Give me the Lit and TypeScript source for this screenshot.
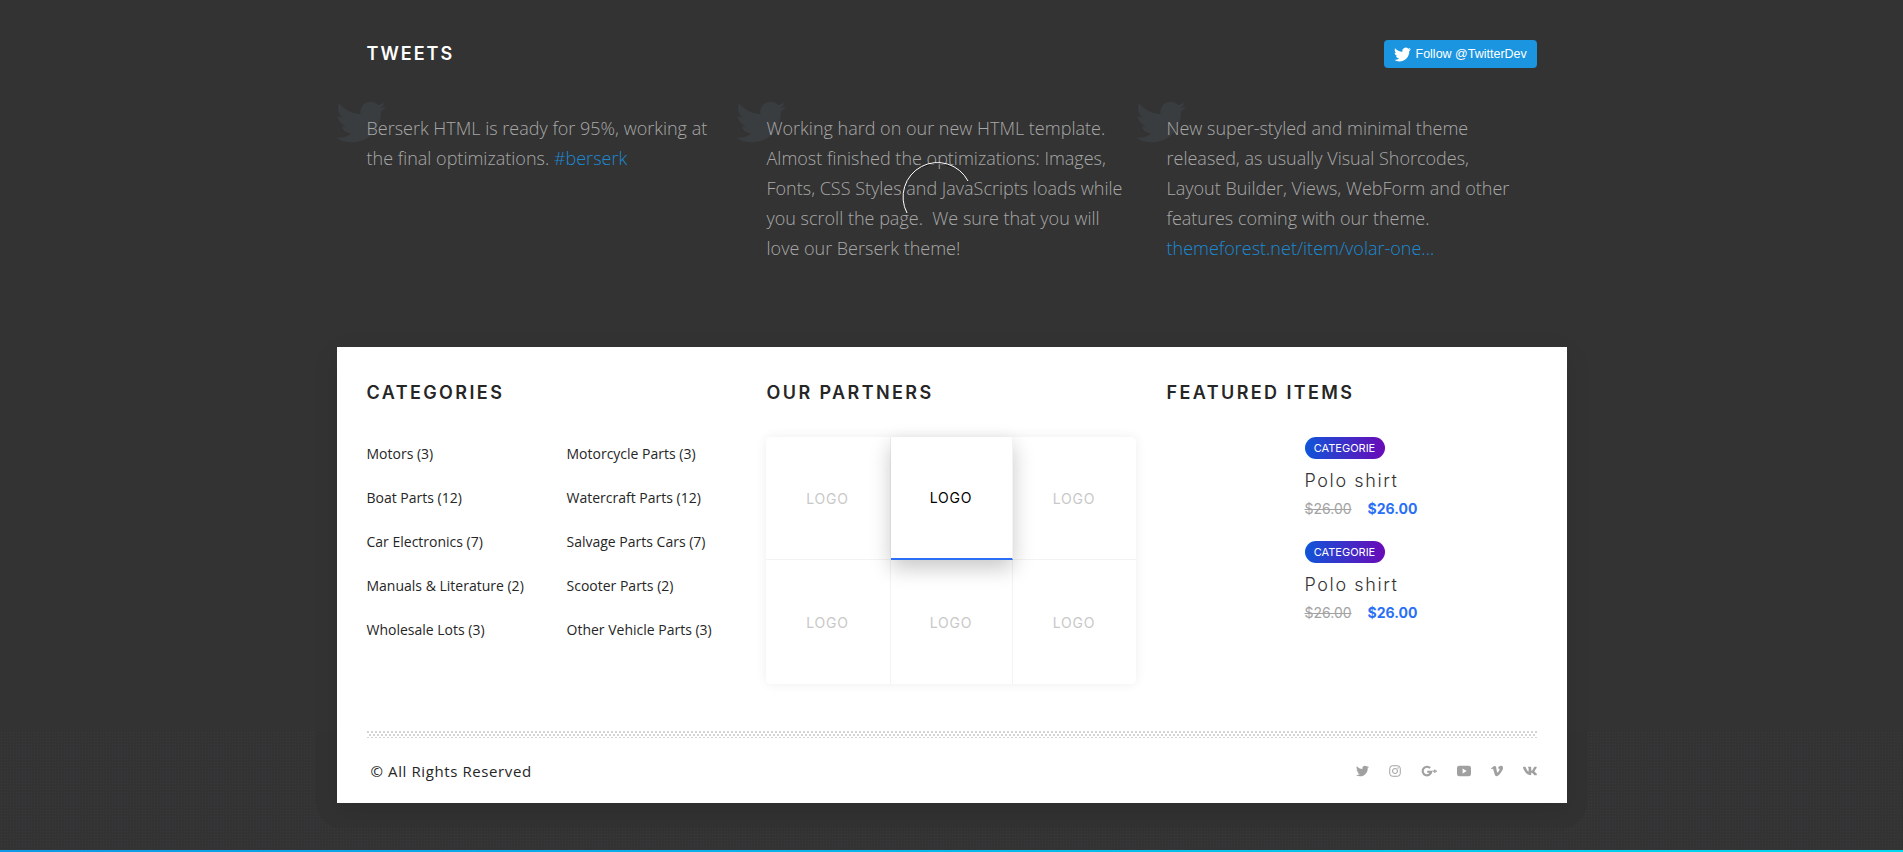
import { LitElement, html, css, svg } from "lit";
import { customElement } from "lit/decorators.js";

const BIRD =
  "M23.953 4.57a10 10 0 01-2.825.775 4.958 4.958 0 002.163-2.723c-.951.555-2.005.959-3.127 1.184a4.92 4.92 0 00-8.384 4.482C7.69 8.095 4.067 6.13 1.64 3.162a4.822 4.822 0 00-.666 2.475c0 1.71.87 3.213 2.188 4.096a4.904 4.904 0 01-2.228-.616v.06a4.923 4.923 0 003.946 4.827 4.996 4.996 0 01-2.212.085 4.936 4.936 0 004.604 3.417 9.867 9.867 0 01-6.102 2.105c-.39 0-.779-.023-1.17-.067a13.995 13.995 0 007.557 2.209c9.053 0 13.998-7.496 13.998-13.985 0-.21 0-.42-.015-.63A9.935 9.935 0 0024 4.59z";

const bird = (cls: string) =>
  html`<svg class=${cls} viewBox="0 0 24 24"><path d=${BIRD}></path></svg>`;

// width in px, viewBox, body
const SOCIAL = [
  { w: 13, box: "0 0 24 24", body: svg`<path d=${BIRD}></path>` },
  {
    w: 12,
    box: "0 0 24 24",
    body: svg`<rect x="1.5" y="1.5" width="21" height="21" rx="5.5" fill="none" stroke="currentColor" stroke-width="2"></rect><circle cx="12" cy="12" r="5" fill="none" stroke="currentColor" stroke-width="2"></circle><circle cx="18" cy="6" r="1.4"></circle>`,
  },
  {
    w: 16,
    box: "0 0 32 28",
    body: svg`<path d="M18.2 8.2a8.6 8.6 0 1 0 2.2 7.3H12.4" fill="none" stroke="currentColor" stroke-width="4.4"></path><path d="M26.4 10.8h2.4v2.4h3.2v2.4h-3.2V18h-2.4v-2.4h-3.2v-2.4h3.2z"></path>`,
  },
  {
    w: 14,
    box: "0 0 24 24",
    body: svg`<path fill-rule="evenodd" d="M4 3h16a4 4 0 0 1 4 4v10a4 4 0 0 1-4 4H4a4 4 0 0 1-4-4V7a4 4 0 0 1 4-4zm5.6 4.8v8.4l7-4.2z"></path>`,
  },
  {
    w: 12,
    box: "0 0 24 24",
    body: svg`<path d="M23.977 6.416c-.105 2.338-1.739 5.543-4.894 9.609-3.268 4.247-6.026 6.37-8.29 6.37-1.409 0-2.578-1.294-3.553-3.881L5.322 11.4C4.603 8.816 3.834 7.522 3.01 7.522c-.179 0-.806.378-1.881 1.132L0 7.197a315.065 315.065 0 003.501-3.128C5.08 2.701 6.266 1.984 7.055 1.91c1.867-.18 3.016 1.1 3.447 3.838.465 2.953.789 4.789.971 5.507.539 2.45 1.131 3.674 1.776 3.674.502 0 1.256-.796 2.265-2.385 1.004-1.589 1.54-2.797 1.612-3.628.144-1.371-.395-2.061-1.614-2.061-.574 0-1.167.121-1.777.391 1.186-3.868 3.434-5.757 6.762-5.637 2.473.06 3.628 1.664 3.493 4.797z"></path>`,
  },
  {
    w: 14,
    box: "18 56 540 400",
    body: svg`<path d="M545 117.7c3.7-12.5 0-21.7-17.8-21.7h-58.9c-15 0-21.9 7.9-25.6 16.7 0 0-29.4 72.4-71 119.3-13.4 13.4-19.5 17.7-26.8 17.7-3.7 0-9.2-4.3-9.2-16.8V117.7c0-15-4.2-21.7-16.6-21.7h-92.6c-9.4 0-15 7-15 13.5 0 14.2 21.2 17.5 23.4 57.5v86.8c0 19-3.4 22.5-10.9 22.5-20 0-68.6-73.4-97.4-157.4-5.8-16.3-11.5-22.9-26.6-22.9H38.8c-16.8 0-20.2 7.9-20.2 16.7 0 15.6 20 93.1 93.1 195.5C160.4 378.1 229 416 291.4 416c37.5 0 42.1-8.4 42.1-22.9 0-66.8-3.4-73.1 15.4-73.1 8.7 0 23.7 4.4 58.7 38.1 40 40 46.6 57.9 69 57.9h58.9c16.8 0 25.3-8.4 20.4-25-11.2-34.9-86.9-106.7-90.3-111.5-8.7-11.2-6.2-16.2 0-26.2.1-.1 72-101.3 79.4-135.6z"></path>`,
  },
];

const CATEGORIES = [
  ["Motors (3)", "Motorcycle Parts (3)"],
  ["Boat Parts (12)", "Watercraft Parts (12)"],
  ["Car Electronics (7)", "Salvage Parts Cars (7)"],
  ["Manuals & Literature (2)", "Scooter Parts (2)"],
  ["Wholesale Lots (3)", "Other Vehicle Parts (3)"],
];

@customElement("app-root")
export class AppRoot extends LitElement {
  static styles = css`
    :host {
      display: block;
      height: 852px;
      overflow: hidden;
      position: relative;
      background: #333;
      font-family: "Open Sans", sans-serif;
    }

    .band {
      position: absolute;
      left: 0;
      right: 0;
      top: 731px;
      height: 119px;
      background-color: #333;
      background-image: radial-gradient(#383b3d 0.7px, transparent 0.8px);
      background-size: 3px 3px;
    }

    .band::after {
      content: "";
      position: absolute;
      left: 316px;
      right: 316px;
      top: 0;
      height: 97px;
      border-radius: 0 0 26px 26px;
      background: #323232;
    }

    .page {
      position: relative;
      width: 1230px;
      margin: 0 auto;
    }

    .head {
      display: flex;
      justify-content: space-between;
      align-items: center;
      height: 28px;
      margin: 0 30px;
      padding-top: 40px;
    }

    h3 {
      margin: 0;
      font-family: Inter, sans-serif;
      font-size: 18px;
      font-weight: 600;
      letter-spacing: 2px;
      line-height: 28px;
      color: #fff;
      text-transform: uppercase;
    }

    .follow {
      display: flex;
      align-items: center;
      gap: 5px;
      box-sizing: border-box;
      width: 153px;
      height: 28px;
      padding-left: 10px;
      border-radius: 4px;
      background: #1b95e0;
      color: #fff;
      font-family: "Liberation Sans", sans-serif;
      font-size: 12.5px;
    }

    .follow svg {
      width: 17px;
      height: 17px;
      fill: #fff;
    }

    .tweets {
      display: grid;
      grid-template-columns: repeat(3, 400px);
      margin: 35px 0 0 30px;
      height: 179px;
    }

    .tweet {
      position: relative;
      width: 359px;
      font-size: 18px;
      font-weight: 300;
      line-height: 30px;
      color: #a8a8a8;
    }

    .tweet p {
      position: relative;
      margin: 0;
      padding-top: 10px;
    }

    .tweet a {
      color: #1b8ad3;
    }

    .tweet .bg {
      position: absolute;
      left: -31px;
      top: -6px;
      width: 50px;
      height: 50px;
      fill: #3a3d40;
    }

    .arc {
      position: absolute;
      left: 895px;
      top: 155px;
      width: 85px;
      height: 70px;
      fill: none;
    }

    .card {
      box-sizing: border-box;
      height: 456px;
      margin-top: 65px;
      padding: 0 30px;
      background: #fff;
      box-shadow: 0 8px 24px rgba(0, 0, 0, 0.1);
    }

    .cols {
      display: grid;
      grid-template-columns: repeat(3, 400px);
      height: 384px;
      padding-top: 32px;
      box-sizing: border-box;
    }

    .cols h3 {
      color: #262626;
      letter-spacing: 2.4px;
    }

    .cats {
      display: grid;
      grid-template-columns: 200px 170px;
      margin-top: 25px;
      font-size: 14px;
      line-height: 44px;
      color: #262626;
    }

    .logos {
      display: grid;
      grid-template-columns: 125px 122px 123px;
      grid-template-rows: 123px 124px;
      width: 370px;
      margin: 30px 0 0 -1px;
      border-radius: 5px;
      box-shadow: 0 0 12px rgba(0, 0, 0, 0.07);
    }

    .logo {
      display: flex;
      align-items: center;
      justify-content: center;
      box-sizing: border-box;
      border-right: 1px solid #f3f3f3;
      border-bottom: 1px solid #f3f3f3;
      font-family: Inter, sans-serif;
      font-size: 14px;
      letter-spacing: 0.8px;
      color: #c8c8c8;
    }

    .logo:nth-child(3n) {
      border-right: 0;
    }

    .logo:nth-child(n + 4) {
      border-bottom: 0;
    }

    .logo.on {
      position: relative;
      background: #fff;
      color: #000;
      border-bottom: 2px solid #2a6ff5;
      box-shadow: 0 8px 20px rgba(0, 0, 0, 0.22);
    }

    .items {
      margin: 28px 0 0 138px;
    }

    .item {
      height: 104px;
    }

    .badge {
      display: inline-block;
      width: 80px;
      height: 22px;
      border-radius: 11px;
      background: linear-gradient(90deg, #0f55d8, #6a0ab8);
      color: #fff;
      font-family: Inter, sans-serif;
      font-size: 11px;
      line-height: 22px;
      text-align: center;
    }

    .name {
      margin-top: 8px;
      font-family: Inter, sans-serif;
      font-size: 18px;
      font-weight: 300;
      letter-spacing: 1.6px;
      line-height: 28px;
      color: #333;
    }

    .price {
      display: flex;
      gap: 16px;
      margin-top: 4px;
      font-family: Inter, sans-serif;
      font-size: 14px;
      line-height: 20px;
    }

    .price s {
      color: #a3a3a3;
    }

    .price b {
      color: #2a6ff5;
      font-weight: 700;
    }

    .dots {
      height: 7px;
      background-image: radial-gradient(circle at 1px 1px, #d4d4d4 0.8px, transparent 1px),
        radial-gradient(circle at 3px 4px, #d4d4d4 0.8px, transparent 1px);
      background-size: 4px 6px;
    }

    .foot {
      display: flex;
      justify-content: space-between;
      align-items: center;
      height: 65px;
      padding-left: 4px;
      font-size: 15px;
      letter-spacing: 0.6px;
      color: #262626;
    }

    .social {
      display: flex;
      gap: 20px;
      color: #a0a0a0;
    }

    .social svg {
      height: 14px;
      fill: currentColor;
    }

    .bar {
      position: absolute;
      left: 0;
      right: 0;
      bottom: 0;
      height: 2px;
      background: linear-gradient(90deg, #0e9ae6, #00d8f0);
    }
  `;

  render() {
    return html`
      <div class="band"></div>
      <div class="page">
        <div class="head">
          <h3>Tweets</h3>
          <div class="follow">
            <svg viewBox="0 0 24 24"><path d=${BIRD}></path></svg>
            Follow @TwitterDev
          </div>
        </div>
        <div class="tweets">
          <div class="tweet">
            ${bird("bg")}
            <p>Berserk HTML is ready for 95%, working at the final optimizations. <a>#berserk</a></p>
          </div>
          <div class="tweet">
            ${bird("bg")}
            <p>Working hard on our new HTML template. Almost finished the optimizations: Images, Fonts, CSS Styles and JavaScripts loads while you scroll the page.&nbsp; We sure that you will love our Berserk theme!</p>
          </div>
          <div class="tweet">
            ${bird("bg")}
            <p>New super-styled and minimal theme released, as usually Visual Shorcodes, Layout Builder, Views, WebForm and other features coming with our theme. <a>themeforest.net/item/volar-one...</a></p>
          </div>
        </div>
        <div class="card">
          <div class="cols">
            <div>
              <h3>Categories</h3>
              <div class="cats">
                ${CATEGORIES.map(([a, b]) => html`<span>${a}</span><span>${b}</span>`)}
              </div>
            </div>
            <div>
              <h3>Our Partners</h3>
              <div class="logos">
                ${[0, 1, 2, 3, 4, 5].map(
                  (i) => html`<div class="logo ${i === 1 ? "on" : ""}">LOGO</div>`
                )}
              </div>
            </div>
            <div>
              <h3>Featured Items</h3>
              <div class="items">
                ${[0, 1].map(
                  () => html`<div class="item">
                    <span class="badge">CATEGORIE</span>
                    <div class="name">Polo shirt</div>
                    <div class="price"><s>$26.00</s><b>$26.00</b></div>
                  </div>`
                )}
              </div>
            </div>
          </div>
          <div class="dots"></div>
          <div class="foot">
            <span>© All Rights Reserved</span>
            <div class="social">
              ${SOCIAL.map(
                (s) => html`<svg viewBox=${s.box} style="width:${s.w}px">${s.body}</svg>`
              )}
            </div>
          </div>
        </div>
      </div>
      <svg class="arc" viewBox="0 0 85 70">
        <path d="M28.4 11.7 A33.4 33.4 0 0 1 56.6 11.7" stroke="#111" stroke-width="1"></path>
        <path d="M12 58 A34 34 0 1 1 73 26" stroke="#fff" stroke-width="1"></path>
      </svg>
      <div class="bar"></div>
    `;
  }
}
